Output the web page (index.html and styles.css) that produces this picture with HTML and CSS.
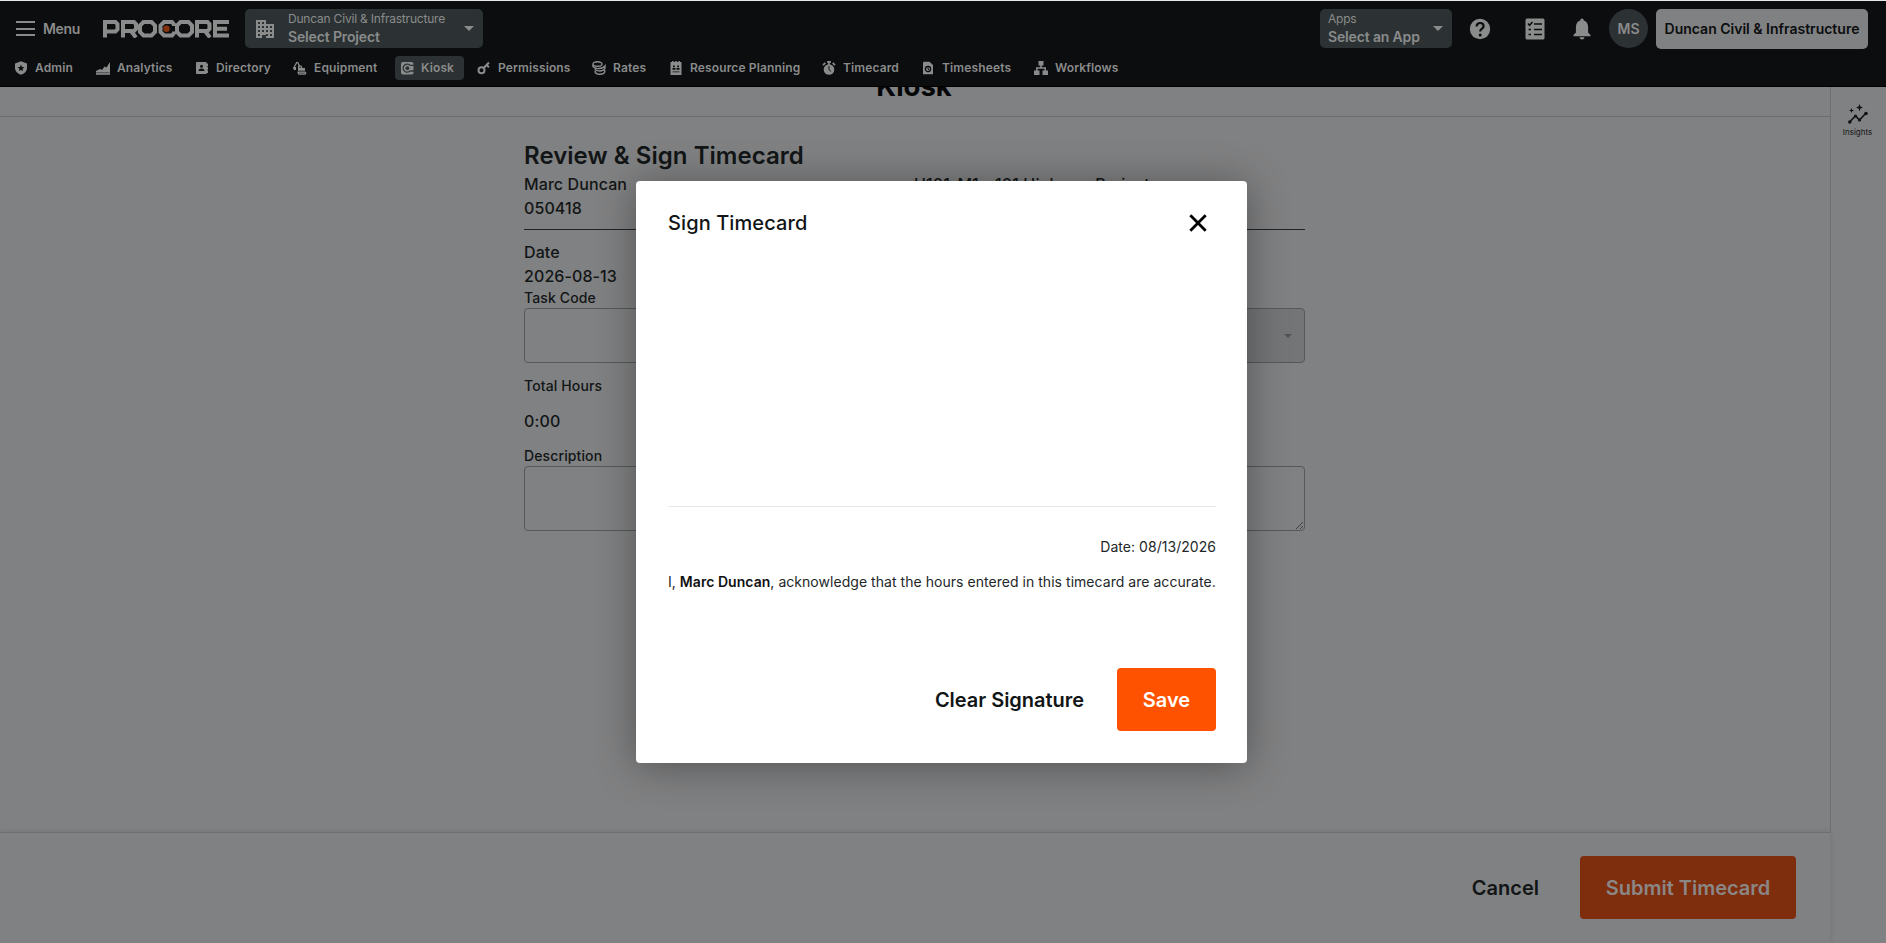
FILE: index.html
```html
<!DOCTYPE html>
<html lang="en">
<head>
<meta charset="utf-8">
<title>Kiosk</title>
<link rel="stylesheet" href="styles.css">
</head>
<body>
<div class="app">
  <header class="header">
    <div class="bar">
      <div class="menu"><i class="burger"></i><span>Menu</span></div>
      <svg class="logo" width="126" height="18" viewBox="0 0 126 18" fill="none" stroke="#8a8b8b" stroke-width="4">
        <path d="M2 17.500V2H12.500L14.500 4V9.500L12.500 11.500H4"/>
        <path d="M20 17.500V2H31L33 4V9L31 11H22M28 11L33 17.500"/>
        <path d="M40.500 2H48.500L52 5.500V12L48.500 15.500H40.500L37 12V5.500Z"/>
        <path d="M71 6V4.500L69 2H61L57.500 5.500V12L61 15.500H69L71 13V11.500"/>
        <path d="M77.500 2H85.500L89 5.500V12L85.500 15.500H77.500L74 12V5.500Z"/>
        <path d="M94 17.500V2H104.500L106.500 4V9L104.500 11H96M102 11L107 17.500"/>
        <path d="M126 2H112V15.500H126M112 8.700H124"/>
        <circle cx="63.500" cy="8.700" r="3.200" fill="#87320f" stroke="none"/>
      </svg>
      <div class="picker project">
        <svg width="20" height="20" viewBox="0 0 20 20"><path fill="#8a8b8b" d="M1 1H11V5H19V19H11V16H7V19H1Z"/><path fill="#2c3233" d="M3 3h2v2H3zM7 3h2v2H7zM3 7h2v2H3zM7 7h2v2H7zM11 7h2v2h-2zM15 7h2v2h-2zM3 11h2v2H3zM7 11h2v2H7zM11 11h2v2h-2zM15 11h2v2h-2zM3 15h2v2H3zM11 15h2v2h-2zM15 15h2v2h-2z"/></svg>
        <div class="picker-text"><span>Duncan Civil &amp; Infrastructure</span><b>Select Project</b></div>
        <i class="caret"></i>
      </div>
      <div class="picker apps">
        <div class="picker-text"><span>Apps</span><b>Select an App</b></div>
        <i class="caret"></i>
      </div>
      <svg class="help" width="22" height="22" viewBox="0 0 22 22"><circle cx="11" cy="11" r="10.200" fill="#8a8b8b"/><path d="M7.600 8.500C7.600 3.700 14.600 4 14.600 8.300C14.600 10.600 11.200 10.800 11.200 13.500" fill="none" stroke="#0b0d0e" stroke-width="2.200"/><circle cx="11.200" cy="17" r="1.500" fill="#0b0d0e"/></svg>
      <svg class="tasks" width="20" height="22" viewBox="0 0 20 22"><rect x=".5" y=".5" width="19" height="21" rx="1.500" fill="#8a8b8b"/><path d="M9 6h8M9 11.500h8M9 16.500h8M3.500 11.500h2.500M3.500 16.500h2.500M3 5.500l1.500 1.700L7.500 4" fill="none" stroke="#0b0d0e" stroke-width="1.600"/></svg>
      <svg class="bell" width="18" height="22" viewBox="0 0 18 22" fill="#8a8b8b"><path d="M9 .5C10.200.5 10.700 1.400 10.700 2.600C13.500 3.300 15.100 5.800 15.100 9V14.500L17.500 17V18.200H.5V17L2.900 14.500V9C2.900 5.800 4.500 3.300 7.300 2.600C7.300 1.400 7.800.5 9 .5ZM6.600 19.300H11.400C11.400 22.200 6.600 22.200 6.600 19.300Z"/></svg>
      <div class="avatar">MS</div>
      <div class="company">Duncan Civil &amp; Infrastructure</div>
    </div>
    <nav class="nav">
      <a class="tab"><svg width="14" height="14" viewBox="0 0 14 14"><path fill="#8a8b8b" d="M7 .3L13 2.500V7C13 10.200 10.300 12.700 7 13.800C3.700 12.700 1 10.200 1 7V2.500Z"/><path fill="#0b0d0e" d="M7 3.600l1 2.300 2.400.2-1.800 1.600.5 2.400L7 8.900l-2.100 1.200.5-2.400-1.800-1.600L6 5.900z"/></svg><span>Admin</span></a>
      <a class="tab"><svg width="14" height="14" viewBox="0 0 14 14" fill="#8a8b8b"><path d="M0 10L4 8L6 9L8.500 5.500L10.500 6.500L14 1V13.700H0Z"/><path d="M0 11.700H13.500" stroke="#0b0d0e" stroke-width=".5"/></svg><span>Analytics</span></a>
      <a class="tab"><svg width="14" height="14" viewBox="0 0 14 14"><path fill="#8a8b8b" d="M2 1H11.500V2.500H13V5H12.300V6H13V8.500H12.300V9.500H13V12H11.500V13H2Q1 13 1 12V2Q1 1 2 1Z"/><circle cx="6.500" cy="5.300" r="1.500" fill="#0b0d0e"/><path fill="#0b0d0e" d="M3.500 10Q3.500 7.500 6.500 7.500T9.500 10Z"/></svg><span>Directory</span></a>
      <a class="tab"><svg width="14" height="14" viewBox="0 0 14 14"><path fill="none" stroke="#8a8b8b" stroke-width="1.300" d="M4.500 1L7 6M4 1L1.200 6"/><path fill="#8a8b8b" d="M0 6H3V9H1Q0 8 0 6ZM5 4.500H8.500L9.500 7H12V9.700H5ZM4.500 10.500H12.500L13.500 12L12.500 13.700H5.500L4.500 12Z"/><path stroke="#0b0d0e" stroke-dasharray="1 1" d="M6.500 12.200h6"/><path stroke="#0b0d0e" d="M6.500 6.200h1.500"/></svg><span>Equipment</span></a>
      <a class="tab kiosk"><svg width="14" height="14" viewBox="0 0 14 14"><rect x="1" y="1" width="12.500" height="12.500" rx="2" fill="#8a8b8b"/><path d="M10.300 4.700A4 4 0 1 0 10.300 9.700M10.500 4.300H14M10.500 10H14" fill="none" stroke="#2c3233" stroke-width="1.300"/><circle cx="7.400" cy="7.200" r="1.900" fill="#2c3233"/></svg><span>Kiosk</span></a>
      <a class="tab"><svg width="14" height="14" viewBox="0 0 14 14" fill="none" stroke="#8a8b8b" stroke-width="2"><circle cx="4.500" cy="9.300" r="3"/><path d="M6.700 7L12 1.500M9.500 4L12 6.200"/></svg><span>Permissions</span></a>
      <a class="tab"><svg width="14" height="14" viewBox="0 0 14 14" fill="none" stroke="#8a8b8b" stroke-width="1.400"><ellipse cx="5.500" cy="3" rx="4.500" ry="2.200"/><path d="M1 3.500V5.500Q3 8 7 7.500Q11.500 7.200 13 5V7.500Q11.500 10 7.500 10Q4 10 2.800 8M3.200 9.500V11.500Q5 13.500 8 13.300Q12.200 13 12.700 11V9"/></svg><span>Rates</span></a>
      <a class="tab"><svg width="14" height="14" viewBox="0 0 14 14"><path fill="#8a8b8b" d="M1.500 1H3V0H4.500V1H6.200V0H7.800V1H9.500V0H11V1H12.500V14H1.500Z"/><path fill="#0b0d0e" d="M4 4.500h1.800v1.800H4zM8.200 4.500H10v1.800H8.200zM3.500 7h3v1.800h-3zM7.500 7h3v1.800h-3zM3.500 10.500h7v.7h-7z"/></svg><span>Resource Planning</span></a>
      <a class="tab"><svg width="14" height="14" viewBox="0 0 14 14"><circle cx="7" cy="8.500" r="5.300" fill="#8a8b8b"/><path d="M5 .8H9M7 .8V4M1 4.200L3.300 1.900M13 4.200L10.700 1.900" stroke="#8a8b8b" stroke-width="1.700"/><path d="M7 5.200V8.500L8.800 10.500" fill="none" stroke="#0b0d0e"/></svg><span>Timecard</span></a>
      <a class="tab"><svg width="14" height="14" viewBox="0 0 14 14"><path fill="#8a8b8b" d="M3 .7H8.500L12 4V13.300H2V1.700Q2 .7 3 .7Z"/><circle cx="7" cy="8" r="2.600" fill="none" stroke="#0b0d0e" stroke-width="1.300"/><path d="M7 6v2l1 1" fill="none" stroke="#0b0d0e"/></svg><span>Timesheets</span></a>
      <a class="tab"><svg width="14" height="14" viewBox="0 0 14 14" fill="#8a8b8b"><path d="M4.500 0H9.500V4.500H7.800V6.200H12V9.500H14V14H8.500V9.500H10.500V7.700H3.500V9.500H5.500V14H0V9.500H2V6.200H6.200V4.500H4.500Z"/></svg><span>Workflows</span></a>
    </nav>
  </header>
  <div class="body">
    <main class="main">
      <div class="title"><h1>Kiosk</h1></div>
      <div class="content">
        <h2>Review &amp; Sign Timecard</h2>
        <div class="who"><div>Marc Duncan<br>050418</div><div>H101-M1 - 101 Highway Project</div></div>
        <div class="date">Date<br>2026-08-13</div>
        <label>Task Code</label>
        <div class="select"><i class="caret small"></i></div>
        <label class="total">Total Hours</label>
        <div class="hours">0:00</div>
        <label>Description</label>
        <div class="textarea"><svg width="9" height="9" viewBox="0 0 9 9"><path d="M1 8L8 1M5 8L8 5" stroke="#3c3f40"/></svg></div>
      </div>
      <footer class="footer"><span class="cancel">Cancel</span><span class="btn submit">Submit Timecard</span></footer>
    </main>
    <aside class="aside">
      <svg width="22" height="22" viewBox="0 0 22 22"><path d="M2.500 18L8.500 12L12.500 16L19 9" fill="none" stroke="#111415" stroke-width="1.600"/><g fill="#111415"><circle cx="2.800" cy="18" r="1.800"/><circle cx="8.500" cy="12" r="1.600"/><circle cx="12.500" cy="16" r="1.600"/><circle cx="19" cy="9.500" r="1.800"/><path d="M12.500 0L13.500 2.600L16 3.600L13.500 4.600L12.500 7.200L11.500 4.600L9 3.600L11.500 2.600ZM4.500 4L5.200 5.800L7 6.500L5.200 7.200L4.500 9L3.800 7.200L2 6.500L3.800 5.800Z"/></g></svg>
      <span>Insights</span>
    </aside>
  </div>
</div>
<section class="modal">
  <div class="modal-head"><span>Sign Timecard</span><svg width="18" height="18" viewBox="0 0 18 18"><path d="M1.300 1.300L16.700 16.700M16.700 1.300L1.300 16.700" stroke="#000" stroke-width="2.800"/></svg></div>
  <div class="pad"></div>
  <p class="signed">Date: 08/13/2026</p>
  <p class="ack">I, <b>Marc Duncan</b>, acknowledge that the hours entered in this timecard are accurate.</p>
  <div class="actions"><span class="clear">Clear Signature</span><span class="btn save">Save</span></div>
</section>
</body>
</html>
```

FILE: styles.css
```css
* { box-sizing: border-box; }
body { margin: 0; font-family: Inter, sans-serif; color: #121516; background: #808182; overflow: hidden; }
svg { display: block; flex: none; }
.app { height: 943px; display: flex; flex-direction: column; border-top: 1px solid #e4ebe5; }
.header { height: 86px; flex: none; background: #0b0d0e; color: #8a8b8b; border-bottom: 1px solid #000; position: relative; }
.bar { height: 55px; display: flex; align-items: center; padding: 0 18px 0 16px; }
.menu { display: flex; align-items: center; width: 87px; gap: 8px; font-size: 14px; font-weight: 600; letter-spacing: -.3px; }
.burger { width: 19px; height: 15px; border-top: 2px solid; border-bottom: 2px solid; display: flex; align-items: center; }
.burger::before { content: ""; height: 2px; width: 19px; background: #8a8b8b; }
.logo { margin-right: 16px; }
.picker { height: 39px; border-radius: 5px; background: #2c3233; display: flex; align-items: center; }
.picker-text { display: flex; flex-direction: column; flex: 1; font-size: 12px; line-height: 18px; white-space: nowrap; letter-spacing: -.2px; padding-bottom: 2px; }
.picker-text b { font-size: 14px; font-weight: 600; letter-spacing: -.15px; }
.project { width: 238px; padding: 0 9px 0 10px; }
.project svg { margin-right: 13px; }
.apps { width: 132px; padding: 0 9px 0 8px; margin-left: auto; }
.caret { border: 5px solid transparent; border-top-color: #8a8b8b; border-bottom: 0; }
.help { margin-left: 17px; }
.tasks { margin-left: 34px; }
.bell { margin-left: 28px; }
.avatar { width: 39px; height: 39px; border-radius: 50%; background: #2c3233; margin-left: 18px; display: grid; place-items: center; font-size: 14px; font-weight: 600; }
.company { width: 212px; height: 40px; margin-left: 8px; border-radius: 5px; background: #808182; color: #0b0d0e; display: grid; place-items: center; font-size: 14px; font-weight: 600; white-space: nowrap; }
.nav { display: grid; grid-template-columns: 82px 99px 98px 102px 82px 115px 77px 153px 99px 113px 100px; padding-left: 14px; }
.tab { height: 24px; display: flex; align-items: center; gap: 7px; font-size: 12px; font-weight: 600; white-space: nowrap; letter-spacing: .13px; }
.tab span { padding-bottom: 2px; }
.kiosk { background: #2c3233; border-radius: 4px; width: 69px; padding-left: 5px; }
.body { flex: 1; display: flex; min-height: 0; }
.main { width: 1830px; display: flex; flex-direction: column; }
.title { height: 30px; flex: none; border-bottom: 1px solid #6b6e6f; display: flex; flex-direction: column; justify-content: flex-end; text-align: center; padding-bottom: 14px; }
h1 { margin: 0; font-size: 27.5px; line-height: 32px; font-weight: 700; color: #050607; padding-right: 2px; }
.content { flex: 1; width: 781px; margin-left: 524px; padding-top: 23px; }
h2 { margin: 0; font-size: 24px; line-height: 32px; font-weight: 600; letter-spacing: .04px; }
.who { display: flex; height: 58px; border-bottom: 1px solid #202324; font-size: 16px; line-height: 24px; font-weight: 500; letter-spacing: .1px; }
.who div { width: 390px; }
.date { margin-top: 10px; font-size: 16px; line-height: 24px; font-weight: 500; letter-spacing: .1px; }
label { display: block; font-size: 14px; line-height: 20px; font-weight: 500; letter-spacing: .12px; }
.select { height: 55px; border: 1px solid #54595a; border-radius: 4px; display: flex; align-items: center; justify-content: flex-end; padding-right: 12px; background: linear-gradient(90deg, #808182 60%, #747576 60%); }
.small { border-width: 4px 4px 0; border-top-color: #4c5557; }
.total { margin-top: 13px; }
.hours { font-size: 16px; line-height: 24px; font-weight: 500; margin: 13px 0; letter-spacing: .15px; }
.textarea { height: 65px; border: 1px solid #54595a; border-radius: 4px; display: flex; align-items: flex-end; justify-content: flex-end; }
.footer { height: 111px; flex: none; display: flex; align-items: center; justify-content: flex-end; padding: 0 34px 1px 0; border-top: 1px solid #6c6f70; box-shadow: 0 0 6px rgba(0,0,0,.1); font-size: 20px; font-weight: 600; }
.cancel { margin-right: 41px; }
.btn { height: 63px; border-radius: 4px; display: grid; place-items: center; font-size: 20px; font-weight: 600; }
.submit { width: 216px; background: #7e2e0d; color: #8b8786; }
.aside { flex: 1; border-left: 1px solid #6c6f70; height: 746px; display: flex; flex-direction: column; align-items: center; padding: 17px 2px 0 0; font-size: 8px; gap: 1px; }
.modal { position: absolute; left: 636px; top: 181px; width: 611px; height: 582px; border-radius: 4px; background: #fff; box-shadow: 0 3px 40px rgba(0,0,0,.36); padding: 0 31px 32px 32px; display: flex; flex-direction: column; }
.modal-head { height: 83px; flex: none; display: flex; align-items: center; justify-content: space-between; padding-right: 9px; font-size: 20px; font-weight: 500; letter-spacing: .1px; }
.pad { height: 243px; flex: none; border-bottom: 1px solid #e3e9e8; }
p { margin: 0; font-size: 14px; line-height: 20px; letter-spacing: .04px; color: #232729; white-space: nowrap; }
p b { font-weight: 600; color: #111; }
.signed { margin-top: 30px; text-align: right; }
.ack { margin-top: 15px; }
.actions { margin-top: auto; display: flex; align-items: center; justify-content: flex-end; font-size: 20px; font-weight: 600; }
.clear { margin-right: 33px; letter-spacing: -.03px; }
.save { width: 99px; background: #ff5200; color: #fff; }
```
